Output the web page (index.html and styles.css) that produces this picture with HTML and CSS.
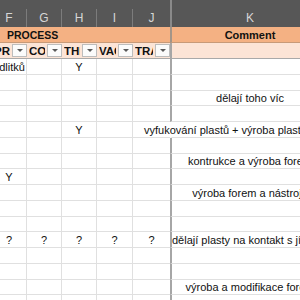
FILE: index.html
```html
<!DOCTYPE html>
<html>
<head>
<meta charset="utf-8">
<link rel="stylesheet" href="styles.css">
</head>
<body>
<div class="sheet">
  <div class="colhead"><span>F</span></div>
  <div class="colhead"><span>G</span></div>
  <div class="colhead"><span>H</span></div>
  <div class="colhead"><span>I</span></div>
  <div class="colhead"><span>J</span></div>
  <div class="colhead kh"><span>K</span></div>

  <div class="group merged">PROCESS</div>
  <div class="group kg">Comment</div>

  <div class="filter"><span class="ft">PRODUCTION</span><span class="dd"></span></div>
  <div class="filter"><span class="ft">COMPONENTS</span><span class="dd"></span></div>
  <div class="filter"><span class="ft">THERMO</span><span class="dd"></span></div>
  <div class="filter"><span class="ft">VACUUM</span><span class="dd"></span></div>
  <div class="filter"><span class="ft">TRANSFER</span><span class="dd"></span></div>
  <div class="filter kf"></div>

  <div class="c">odlitků</div><div class="c"></div><div class="c">Y</div><div class="c"></div><div class="c j"></div><div class="c k"></div>
  <div class="c"></div><div class="c"></div><div class="c"></div><div class="c"></div><div class="c j"></div><div class="c k"></div>
  <div class="c"></div><div class="c"></div><div class="c"></div><div class="c"></div><div class="c j"></div><div class="c k">dělají toho víc</div>
  <div class="c"></div><div class="c"></div><div class="c"></div><div class="c"></div><div class="c j"></div><div class="c k"></div>
  <div class="c"></div><div class="c"></div><div class="c">Y</div><div class="c"></div><div class="c j"></div><div class="c k spill">vyfukování plastů + výroba plastových lahví</div>
  <div class="c"></div><div class="c"></div><div class="c"></div><div class="c"></div><div class="c j"></div><div class="c k"></div>
  <div class="c"></div><div class="c"></div><div class="c"></div><div class="c"></div><div class="c j"></div><div class="c k">kontrukce a výroba forem</div>
  <div class="c">Y</div><div class="c"></div><div class="c"></div><div class="c"></div><div class="c j"></div><div class="c k"></div>
  <div class="c"></div><div class="c"></div><div class="c"></div><div class="c"></div><div class="c j"></div><div class="c k">výroba forem a nástrojů</div>
  <div class="c"></div><div class="c"></div><div class="c"></div><div class="c"></div><div class="c j"></div><div class="c k"></div>
  <div class="c"></div><div class="c"></div><div class="c"></div><div class="c"></div><div class="c j"></div><div class="c k"></div>
  <div class="c">?</div><div class="c">?</div><div class="c">?</div><div class="c">?</div><div class="c j">?</div><div class="c k left">dělají plasty na kontakt s jídlem</div>
  <div class="c"></div><div class="c"></div><div class="c"></div><div class="c"></div><div class="c j"></div><div class="c k"></div>
  <div class="c"></div><div class="c"></div><div class="c"></div><div class="c"></div><div class="c j"></div><div class="c k"></div>
  <div class="c"></div><div class="c"></div><div class="c"></div><div class="c"></div><div class="c j"></div><div class="c k">výroba a modifikace forem</div>
  <div class="c"></div><div class="c"></div><div class="c"></div><div class="c"></div><div class="c j"></div><div class="c k"></div>
</div>
</body>
</html>
```
FILE: styles.css
```css
html, body {
  margin: 0;
  padding: 0;
  background: #ffffff;
  overflow: hidden;
  width: 300px;
  height: 300px;
}
* { box-sizing: border-box; }

.sheet {
  margin-left: -8px;
  display: grid;
  grid-template-columns: 35px 35px 35px 36px 37px 158px;
  grid-template-rows: 27px 16px 16px;
  grid-auto-rows: 15.75px;
  font-family: "Liberation Sans", Arial, sans-serif;
  font-size: 11px;
  color: #111111;
}

.colhead {
  background: #575757;
  padding-top: 9px;
}
.colhead span {
  display: flex;
  height: 100%;
  align-items: center;
  justify-content: center;
  color: #d6d6d6;
  font-size: 12px;
  border-right: 1px solid #7c7c7c;
}
.colhead.kh { border-left: 2px solid #8a8a8a; }
.colhead.kh span { border-right: none; }
.colhead:nth-child(5) span { border-right: none; }

.group {
  background: #f4b183;
  font-weight: bold;
  font-size: 11px;
  display: flex;
  align-items: center;
  border-bottom: 1px solid #c79a78;
}
.group.merged {
  grid-column: span 5;
  padding-left: 15px;
  font-size: 10.5px;
}
.group.kg {
  justify-content: center;
  border-left: 2px solid #a39588;
}

.filter {
  background: #fce4d6;
  display: flex;
  align-items: center;
  padding-left: 2px;
  border-bottom: 1px solid #a9a9a9;
  font-weight: bold;
  font-size: 11.5px;
}
.filter .ft {
  flex: 1;
  min-width: 0;
  overflow: hidden;
  white-space: nowrap;
  margin-right: 2px;
}
.filter .dd {
  flex: none;
  width: 15px;
  height: 13px;
  background: #fbfbfb;
  border: 1px solid #bdbdbd;
  display: flex;
  align-items: center;
  justify-content: center;
}
.filter .dd::before {
  content: "";
  border-left: 3px solid transparent;
  border-right: 3px solid transparent;
  border-top: 3px solid #5a5a5a;
}
.filter.kf { border-left: 2px solid #a6a6a6; }

.c {
  display: flex;
  align-items: center;
  justify-content: center;
  white-space: nowrap;
  border-right: 1px solid #e0e0e0;
  border-bottom: 1px solid #e0e0e0;
  padding-top: 1px;
}
.c.j { border-right: none; }
.c.k {
  border-right: none;
  border-left: 2px solid #a6a6a6;
}
.c.k.spill { border-left-color: transparent; }
.c.k.left { justify-content: flex-start; }
```
